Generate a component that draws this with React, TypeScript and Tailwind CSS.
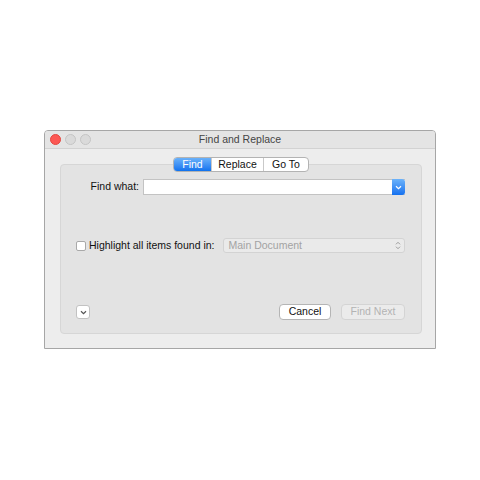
import React from "react";

const font = { fontFamily: '"Liberation Sans", Arial, sans-serif' };

function Chevron({ className = "" }: { className?: string }) {
  return (
    <svg width="7" height="5" viewBox="0 0 7 5" className={className}>
      <path d="M1 1.2 L3.5 3.6 L6 1.2" fill="none" stroke="currentColor" strokeWidth="1.2" />
    </svg>
  );
}

export default function App() {
  return (
    <div className="w-[480px] h-[480px] bg-white pt-[130px] pl-[44px]" style={font}>
      <div className="w-[392px] h-[219px] border border-[#a6a6a6] rounded-t-[4px] bg-[#ededed] flex flex-col overflow-hidden">
        {/* title bar */}
        <div className="relative h-[18px] flex items-center pl-[5px] gap-[4px] bg-[#e4e4e4] border-b border-[#d2d2d2]">
          <div className="w-[11px] h-[11px] rounded-full bg-[#fc5753] border border-[#e2463f]" />
          <div className="w-[11px] h-[11px] rounded-full bg-[#dadada] border border-[#c4c4c4]" />
          <div className="w-[11px] h-[11px] rounded-full bg-[#dadada] border border-[#c4c4c4]" />
          <div className="absolute inset-0 flex items-center justify-center text-[10.5px] text-[#444]">
            Find and Replace
          </div>
        </div>
        {/* body */}
        <div className="flex-1 flex flex-col pl-[15px] pr-[13px] pt-[8px] pb-[14px]">
          <div className="relative z-10 flex justify-center">
            <div className="flex h-[15px] border border-[#b3b3b3] rounded-[4px] overflow-hidden bg-white text-[10.5px] text-[#111]">
              <div className="w-[37px] flex items-center justify-center text-white bg-gradient-to-b from-[#69b1fa] to-[#0d72ee]">Find</div>
              <div className="w-[52px] flex items-center justify-center border-l border-[#c9c9c9]">Replace</div>
              <div className="w-[45px] flex items-center justify-center border-l border-[#c9c9c9]">Go To</div>
            </div>
          </div>
          <div className="-mt-[8px] flex-1 flex flex-col bg-[#e3e3e3] border border-[#d6d6d6] rounded-[4px] pl-[15px] pr-[16px] pb-[13px] text-[10.5px] text-[#111]">
            <div className="mt-[14px] flex items-center h-[16px]">
              <div className="w-[63px] text-right">Find what:</div>
              <div className="ml-[4px] flex-1 h-[16px] flex bg-white border border-[#c3c3c3] border-r-0">
                <div className="flex-1" />
                <div className="w-[13px] -my-px rounded-r-[3px] flex items-center justify-center text-white bg-gradient-to-b from-[#6cb3fa] to-[#1270ef]">
                  <Chevron />
                </div>
              </div>
            </div>
            <div className="mt-[43px] flex items-center h-[15px]">
              <div className="w-[10px] h-[10px] bg-white border border-[#a9a9a9] rounded-[2px]" />
              <div className="ml-[3px]">Highlight all items found in:</div>
              <div className="ml-[9px] flex-1 h-[15px] flex items-center bg-[#eaeaea] border border-[#d3d3d3] rounded-[3px] pl-[4px] pr-[3px] text-[#a3a3a3]">
                <span className="flex-1">Main Document</span>
                <svg width="6" height="9" viewBox="0 0 6 9">
                  <path d="M1 3.3 L3 1.3 L5 3.3 M1 5.7 L3 7.7 L5 5.7" fill="none" stroke="#9a9a9a" strokeWidth="1" />
                </svg>
              </div>
            </div>
            <div className="mt-auto flex items-center h-[16px]">
              <div className="w-[14px] h-[14px] bg-white border border-[#c2c2c2] rounded-[3px] flex items-center justify-center text-[#555]">
                <Chevron />
              </div>
              <div className="flex-1" />
              <div className="w-[52px] h-[16px] bg-white border border-[#b5b5b5] rounded-[4px] flex items-center justify-center">Cancel</div>
              <div className="ml-[10px] w-[64px] h-[16px] bg-[#ebebeb] border border-[#d4d4d4] rounded-[4px] flex items-center justify-center text-[#b3b3b3]">Find Next</div>
            </div>
          </div>
        </div>
      </div>
    </div>
  );
}
